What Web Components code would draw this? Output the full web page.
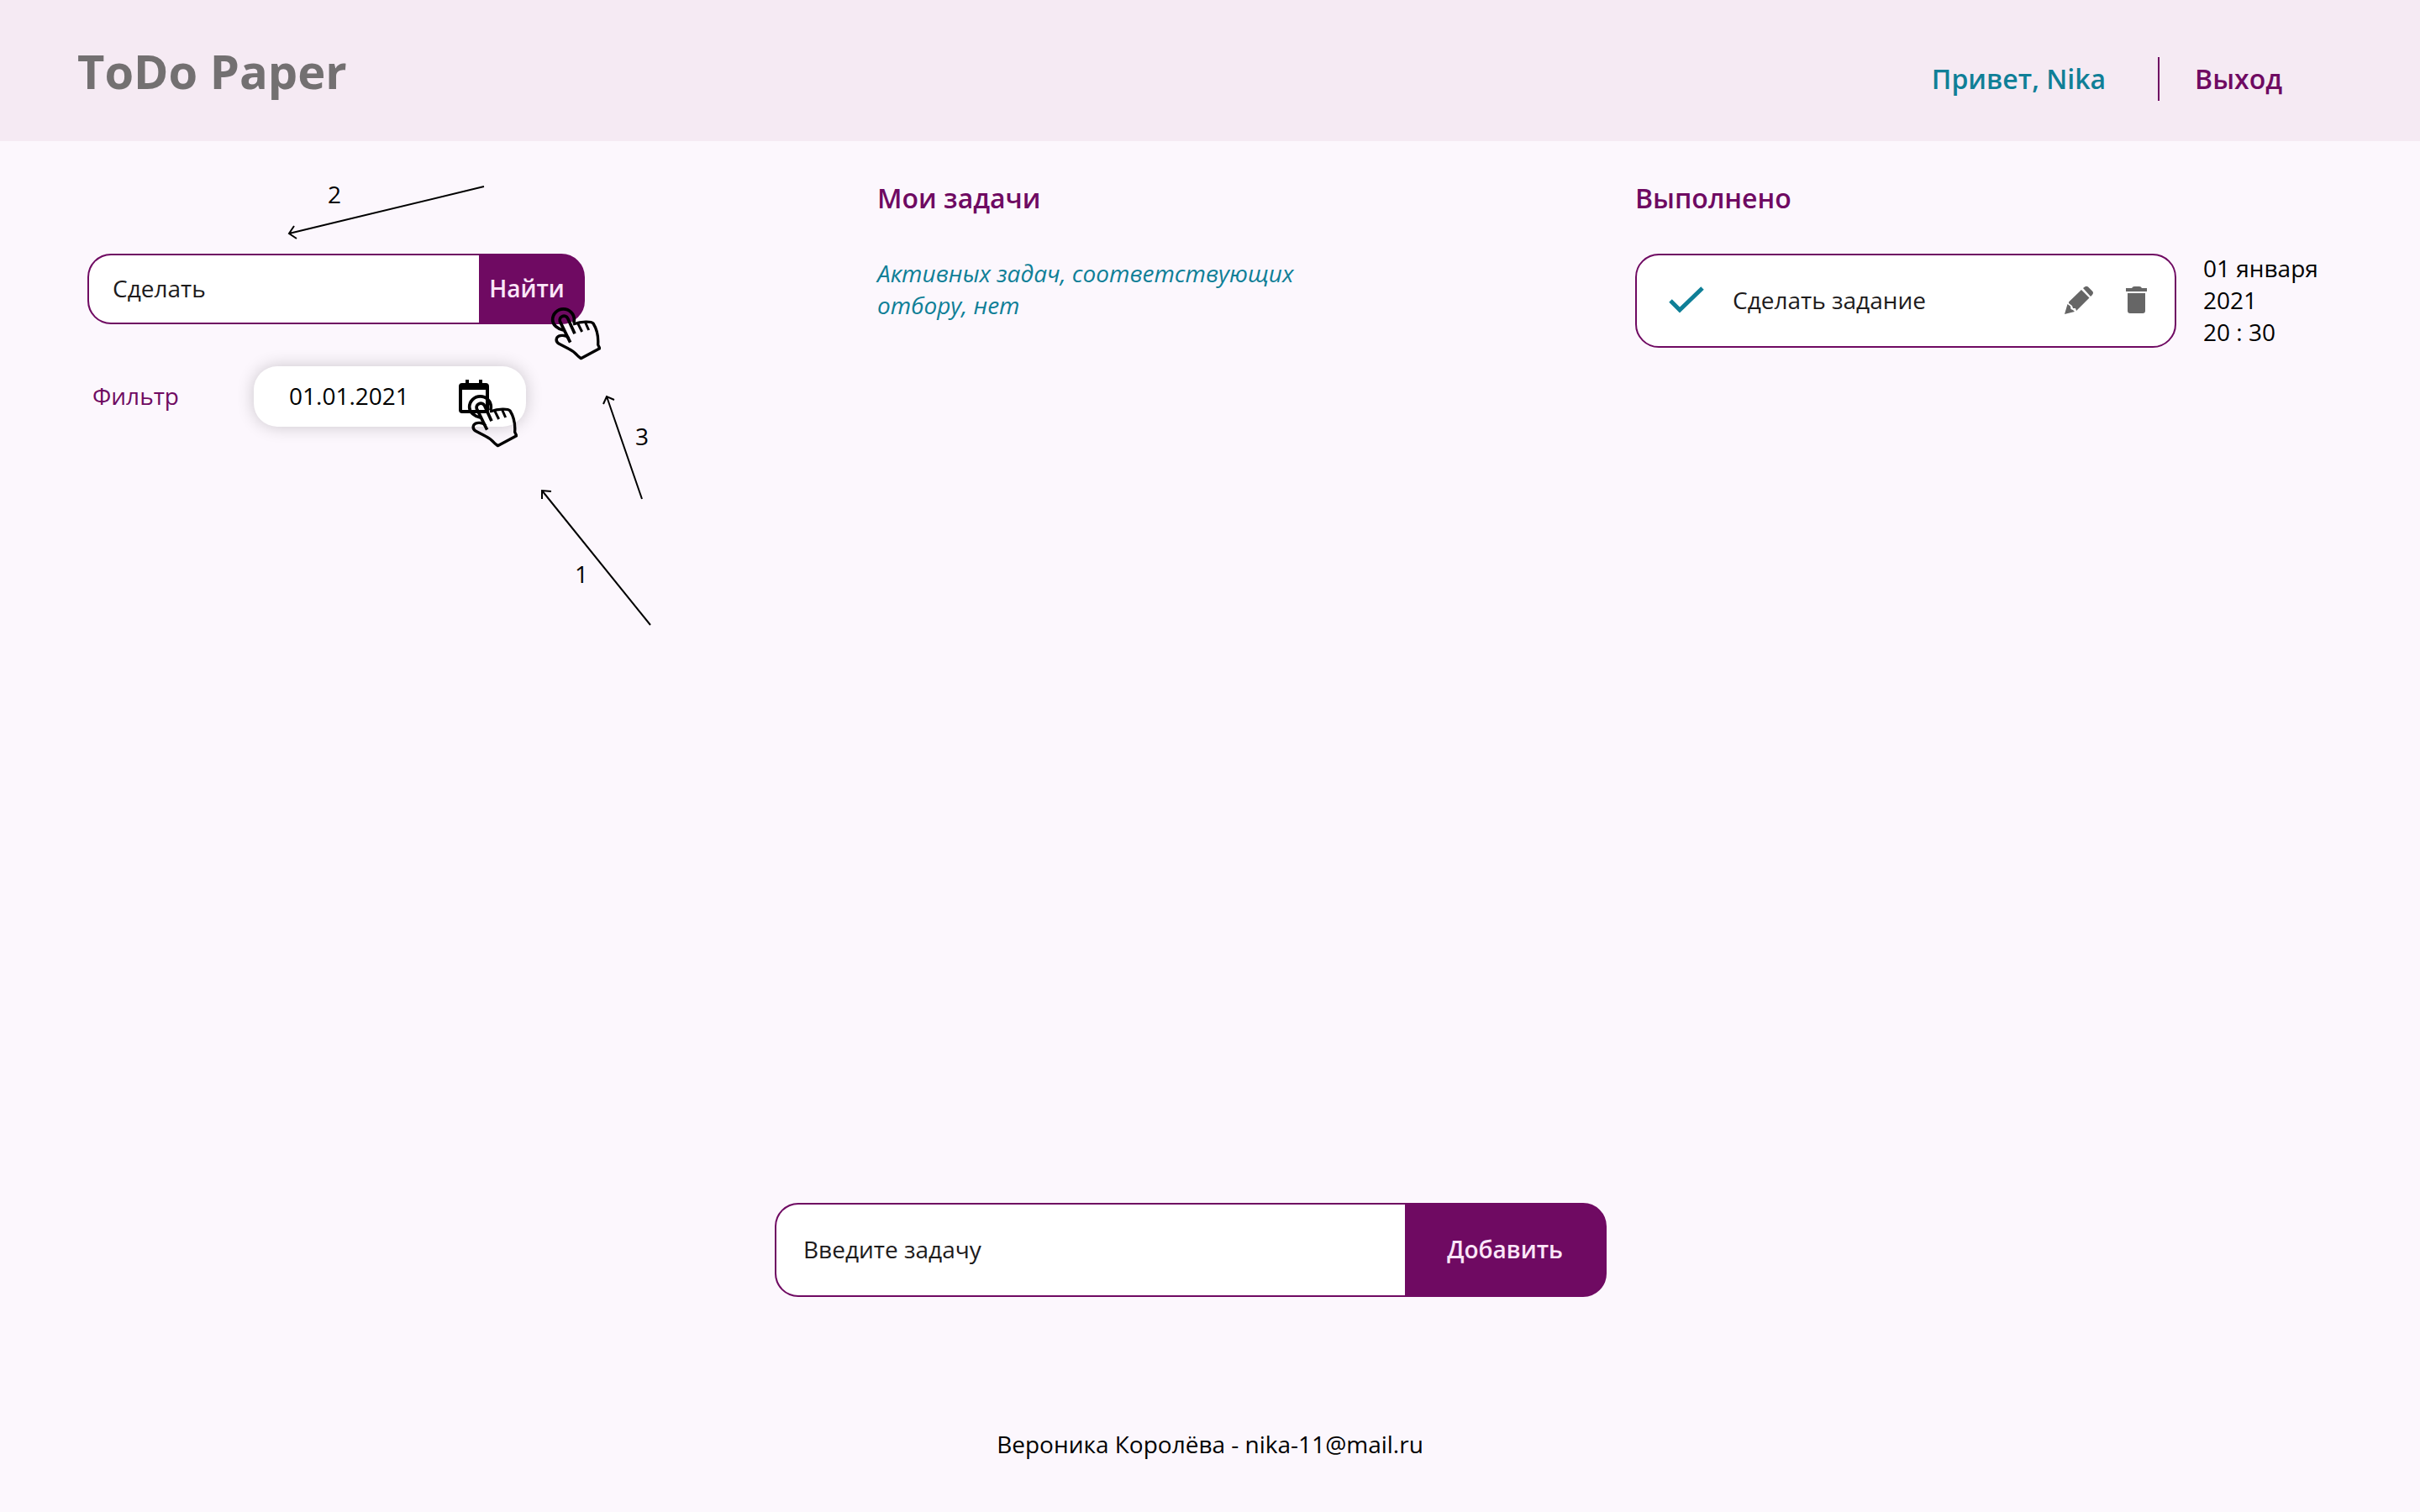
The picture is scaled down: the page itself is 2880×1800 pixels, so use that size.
<!DOCTYPE html>
<html lang="ru">
<head>
<meta charset="utf-8">
<title>ToDo Paper</title>
<style>
  :root {
    --plum: #6f0a62;
    --teal: #0f7f97;
    --page: #fcf7fd;
    --bar: #f5eaf3;
    --ink: #1d1b1c;
    --radius: 28px;
  }
  body {
    margin: 0;
    background: var(--page);
    color: #000;
    font: 400 28px/38px "Open Sans", "Noto Sans", sans-serif;
  }
</style>
</head>
<body>
<todo-app></todo-app>
<script>
const define = (name, html, setup) => {
  const tpl = document.createElement('template');
  tpl.innerHTML = '<style>*{box-sizing:border-box}button,input{font:inherit;color:inherit;margin:0;border:0;background:none;outline:none}</style>' + html;
  customElements.define(name, class extends HTMLElement {
    constructor() {
      super();
      this.attachShadow({ mode: 'open' }).append(tpl.content.cloneNode(true));
    }
    connectedCallback() { if (setup) setup(this, this.shadowRoot); }
  });
};

/* Tapping hand that marks where to click */
define('tap-hand', `
  <style>
    :host { display: block; width: 60px; height: 66px; pointer-events: none; }
    svg { display: block; }
  </style>
  <svg width="60" height="66" viewBox="46 44 180 198" fill="none" stroke="#000" stroke-width="10" stroke-linejoin="round" aria-hidden="true">
    <path d="M92 128C72 124 54 110 54 91A38.500 38.500 0 0 1 131 91Q131 96 129 102" stroke-width="11"/>
    <path d="M117 172L80 97C75 77 101 71 108 86L133 141" stroke-width="11"/>
    <path d="M111 157C104 146 78 143 70 154C65 163 68 171 77 177L110 194C128 202 138 213 145 221L155 229L222 193L216 180C218 151 214 128 199 104C190 96 160 96 127 107"/>
    <path d="M145 106L159 134M171 101L183 128" stroke-width="9"/>
  </svg>`);

define('app-header', `
  <style>
    :host { display: block; background: var(--bar); }
    header { display: flex; justify-content: space-between; padding: 46px 164px 46px 92px; }
    h1 { margin: 0; font-size: 56px; line-height: 76px; font-weight: 700; color: #737071; }
    nav { display: flex; align-items: center; height: 52px; margin: 22px 0 -20px; font-size: 32px; line-height: 44px; font-weight: 600; }
    .hello { color: var(--teal); padding-right: 62px; }
    a { display: flex; align-items: center; height: 52px; padding-left: 42px; border-left: 2px solid var(--plum); color: var(--plum); text-decoration: none; }
  </style>
  <header>
    <h1>ToDo Paper</h1>
    <nav><span class="hello"><slot></slot></span><a href="#logout">Выход</a></nav>
  </header>`);

/* Text field with an attached action button */
define('action-field', `
  <style>
    :host { display: block; }
    form { display: flex; height: var(--field-height, 84px); border: 2px solid var(--plum); border-radius: var(--radius); background: var(--plum); }
    input { flex: 1; min-width: 0; padding: 0 0 2px var(--field-inset, 28px); background: #fff; color: var(--ink); border-radius: 26px 0 0 26px; }
    input::placeholder { color: var(--ink); opacity: 1; }
    button { flex: none; width: var(--button-width, 124px); padding: 0 var(--button-trim, 0px) 2px 0; color: #fbe6f8; font-weight: 600; text-align: center; }
  </style>
  <form onsubmit="return false">
    <input type="text">
    <button type="submit"><slot></slot></button>
  </form>`, (host, root) => {
    const input = root.querySelector('input');
    input.value = host.getAttribute('value') || '';
    input.placeholder = host.getAttribute('hint') || '';
    input.setAttribute('aria-label', host.getAttribute('label'));
  });

define('date-filter', `
  <style>
    :host { display: flex; align-items: center; padding-left: 6px; }
    label { width: 192px; padding-bottom: 2px; color: var(--plum); }
    .pill { position: relative; display: flex; align-items: center; justify-content: space-between; width: 324px; height: 72px; padding: 0 38px 0 42px; border-radius: var(--radius); background: #fff; box-shadow: 0 0 20px rgba(0, 0, 0, .2); }
    input { width: 160px; padding: 0 0 2px; }
    button { display: block; width: 48px; height: 52px; padding: 4px 0 0; color: #000; }
    svg { display: block; }
    tap-hand { position: absolute; left: 254px; top: 33px; }
  </style>
  <label for="date">Фильтр</label>
  <div class="pill">
    <input id="date" type="text" value="01.01.2021">
    <button type="button" aria-label="Календарь">
      <svg width="48" height="48" viewBox="0 0 24 24"><path fill-rule="evenodd" d="M7 1h2v2h6V1h2v2h2a2 2 0 0 1 2 2v14a2 2 0 0 1-2 2H5a2 2 0 0 1-2-2V5a2 2 0 0 1 2-2h2zM5 7v12h14V7z"/></svg>
    </button>
    <tap-hand></tap-hand>
  </div>`);

/* Numbered arrows that explain the order of the steps */
define('step-arrows', `
  <style>
    :host { display: block; position: absolute; left: 0; top: 0; width: 800px; height: 600px; pointer-events: none; }
    svg { position: absolute; inset: 0; }
    span { position: absolute; }
    .one { left: 684px; top: 496px; }
    .two { left: 390px; top: 44px; }
    .three { left: 756px; top: 332px; }
  </style>
  <svg width="800" height="600" viewBox="0 168 800 600" fill="none" stroke="#000" stroke-width="2" aria-hidden="true">
    <path d="M576 222L344 278M350 269L344 278L353 284"/>
    <path d="M764 594L722 472M718 481L722 472L731 476"/>
    <path d="M774 744L645 584M645 594L645 584L656 585"/>
  </svg>
  <span class="one">1</span><span class="two">2</span><span class="three">3</span>`);

define('task-column', `
  <style>
    :host { display: block; }
    h2 { margin: 0 0 44px; font-size: 32px; line-height: 44px; font-weight: 600; color: var(--plum); }
  </style>
  <section><h2></h2><slot></slot></section>`, (host, root) => {
    root.querySelector('h2').textContent = host.getAttribute('heading');
  });

define('empty-note', `
  <style>
    :host { display: block; }
    p { margin: 0; padding-top: 4px; max-width: 520px; font-style: italic; color: var(--teal); }
  </style>
  <p><slot></slot></p>`);

define('task-item', `
  <style>
    :host { display: flex; align-items: flex-start; gap: 32px; }
    article { flex: 1; display: flex; align-items: center; height: 112px; padding: 0 16px 0 32px; border: 2px solid var(--plum); border-radius: var(--radius); background: #fff; color: var(--ink); }
    .name { flex: 1; padding: 0 0 2px 26px; }
    button { width: 56px; height: 56px; padding: 4px; margin-left: 14px; }
    .done { margin: 0; }
    svg { display: block; width: 48px; height: 48px; }
    time { width: 154px; margin-top: -2px; color: #000; }
    time span { display: block; }
  </style>
  <article>
    <button class="done" type="button" aria-label="Выполнено">
      <svg viewBox="0 0 48 48" fill="none" stroke="#0f7f97" stroke-width="5"><path d="M4 24L15 35L42 9"/></svg>
    </button>
    <span class="name"><slot></slot></span>
    <button type="button" aria-label="Изменить">
      <svg viewBox="0 0 48 48" fill="#666"><path d="M29 9L31 7.500Q33 6 35 7.500L40 12.500Q42 14.500 40 17L38 19zM27 11L36.500 20.500L21 36L20 33L17 33L16 30L12 27L12 25.500zM10.500 28L14 30.500L14.500 34L17 35L19 37L7 40z"/></svg>
    </button>
    <button type="button" aria-label="Удалить">
      <svg viewBox="0 0 48 48" fill="#666"><path d="M10 9h7q1-2 3-2h6q2 0 3 2h6v4H10zM12 15h21v21q0 3-3 3H15q-3 0-3-3z"/></svg>
    </button>
  </article>
  <time><span class="day"></span><span class="hour"></span></time>`, (host, root) => {
    root.querySelector('.day').textContent = host.getAttribute('day');
    root.querySelector('.hour').textContent = host.getAttribute('hour');
  });

define('app-footer', `
  <style>
    :host { display: block; }
    footer { padding: 156px 0 62px; text-align: center; }
  </style>
  <footer><slot></slot></footer>`);

define('todo-app', `
  <style>
    :host { display: flex; flex-direction: column; min-height: 100vh; }
    main { position: relative; flex: 1; display: grid; grid-template-columns: 940fr 902fr 830fr; padding: 46px 104px 0; }
    aside { padding-top: 88px; }
    .search { position: relative; width: 592px; margin-bottom: 50px; }
    .search tap-hand { position: absolute; left: 551px; top: 63px; }
    .composer { width: 990px; margin: 0 auto; --field-height: 112px; --button-width: 238px; --field-inset: 32px; }
    .bottom { padding-right: 46px; }
  </style>
  <app-header>Привет, Nika</app-header>
  <main>
    <aside>
      <div class="search">
        <action-field label="Поиск" value="Сделать" style="--button-trim:10px">Найти</action-field>
        <tap-hand></tap-hand>
      </div>
      <date-filter></date-filter>
    </aside>
    <task-column heading="Мои задачи"><empty-note>Активных задач, соответствующих отбору, нет</empty-note></task-column>
    <task-column heading="Выполнено"><task-item day="01 января 2021" hour="20 : 30">Сделать задание</task-item></task-column>
    <step-arrows></step-arrows>
  </main>
  <div class="bottom"><action-field class="composer" label="Новая задача" hint="Введите задачу">Добавить</action-field></div>
  <app-footer>Вероника Королёва - nika-11@mail.ru</app-footer>`);
</script>
</body>
</html>
